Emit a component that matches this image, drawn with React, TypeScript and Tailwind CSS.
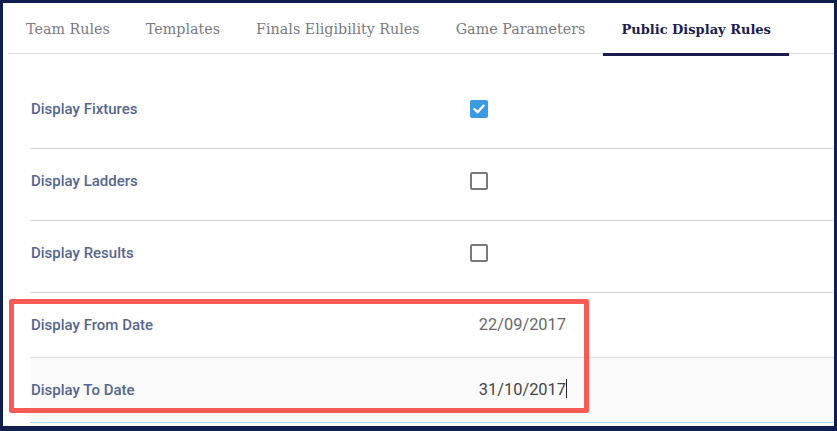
import React from 'react';

const TABS = ['Team Rules', 'Templates', 'Finals Eligibility Rules', 'Game Parameters', 'Public Display Rules'];

const CHECK_ROWS = [
  { label: 'Display Fixtures', checked: true },
  { label: 'Display Ladders', checked: false },
  { label: 'Display Results', checked: false },
];

function Checkbox({ checked }: { checked: boolean }) {
  if (checked) {
    return (
      <span className="flex h-[18px] w-[18px] items-center justify-center rounded-[2px] bg-[#3a9be3]">
        <svg width="12" height="10" viewBox="0 0 12 10" fill="none">
          <path d="M1.5 5.2 4.6 8.2 10.5 1.8" stroke="#fff" strokeWidth="2.4" strokeLinecap="round" strokeLinejoin="round" />
        </svg>
      </span>
    );
  }
  return <span className="block h-[18px] w-[18px] rounded-[2px] border-2 border-[#7a7a7e]" />;
}

export default function App() {
  return (
    <div className="relative h-[431px] w-[837px] bg-[#0f1e4e] pt-[3px] pr-[3px] pb-[5px] pl-[3px]">
      <div className="h-full w-full bg-white pl-[5px]">
        {/* Tabs */}
        <div className="flex h-[51px] border-b border-[#dcdcdc] font-['DejaVu_Serif',serif]">
          {TABS.map((tab, i) => {
            const active = i === TABS.length - 1;
            return (
              <div
                key={tab}
                className={`relative flex items-center px-[18px] pt-[3px] ${
                  active ? 'text-[13px] font-bold text-[#1b1d52]' : 'text-[14.3px] text-[#7b7b80]'
                }`}
              >
                {tab}
                {active && <span className="absolute right-0 -bottom-[3px] left-0 h-[3px] bg-[#181a50]" />}
              </div>
            );
          })}
        </div>

        {/* Rules */}
        <div className="mt-[23px] pl-[22px] font-['Roboto',sans-serif]">
          {CHECK_ROWS.map((row) => (
            <div key={row.label} className="flex h-[72px] items-center border-b border-[#dcdcdc] pb-[7px]">
              <span className="w-[440px] pl-px text-[15px] font-medium text-[#56668f]">{row.label}</span>
              <Checkbox checked={row.checked} />
            </div>
          ))}
          <div className="flex h-[65px] items-center border-b border-[#dcdcdc]">
            <span className="w-[440px] pl-px text-[15px] font-medium text-[#56668f]">Display From Date</span>
            <span className="w-[96px] text-right text-[16.4px] text-[#6a6a6a]">22/09/2017</span>
          </div>
          <div className="flex h-[65px] items-center border-b border-[#a8d6f3] bg-[#fafafa]">
            <span className="w-[440px] pl-px text-[15px] font-medium text-[#56668f]">Display To Date</span>
            <span className="relative w-[96px] text-right text-[16.4px] text-[#454545]">
              31/10/2017
              <span className="absolute top-[1px] -right-[1px] h-[19px] w-px bg-[#222]" />
            </span>
          </div>
        </div>
      </div>

      {/* Highlight annotation */}
      <div className="absolute top-[299px] left-[9px] h-[114px] w-[580px] rounded-[2px] border-[5px] border-[#f85b54]" />
    </div>
  );
}
